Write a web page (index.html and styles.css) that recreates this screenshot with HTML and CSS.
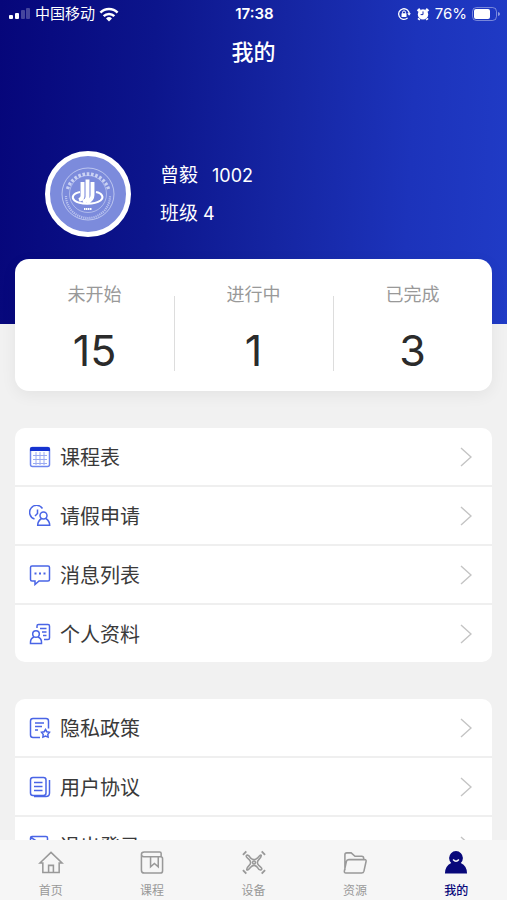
FILE: index.html
```html
<!DOCTYPE html>
<html lang="zh-CN">
<head>
    <meta charset="UTF-8">
    <meta name="viewport" content="width=device-width, initial-scale=1">
    <title>我的</title>
    <link rel="stylesheet" href="styles.css">
</head>
<body>
    <main class="page">
        <header class="hero">
            <div class="status-bar">
                <div class="status-left">
                    <svg width="22" height="12" viewBox="0 0 22 12" fill="#fff">
                        <rect x="0" y="7" width="4" height="4" rx="1"/>
                        <rect x="6" y="5" width="4" height="6" rx="1"/>
                        <rect x="12" y="2" width="4" height="9" rx="1" opacity=".25"/>
                        <rect x="17" y="0" width="4" height="11" rx="1" opacity=".25"/>
                    </svg>
                    <span>中国移动</span>
                    <svg width="20" height="15" viewBox="0 0 18 14" fill="none" stroke="#fff" stroke-width="2.4">
                        <path d="M1 5.2a11.4 11.4 0 0 1 16 0"/>
                        <path d="M4 8.5a7.2 7.2 0 0 1 10 0"/>
                        <path d="M9 13.6l-2.8-2.9a4 4 0 0 1 5.6 0z" fill="#fff" stroke="none"/>
                    </svg>
                </div>
                <span class="time">17:38</span>
                <div class="status-right">
                    <svg width="14" height="14" viewBox="0 0 14 14" fill="none" stroke="#fff" stroke-width="1.3">
                        <path d="M10.6 10.9a5.3 5.3 0 1 1 1.6-3.4"/>
                        <path d="M10.3 6.2h3.6l-1.8 2.6z" fill="#fff" stroke="none"/>
                        <rect x="4.5" y="6.3" width="5" height="3.6" rx=".5" fill="#fff" stroke="none"/>
                        <path d="M5.5 6.5V5.4a1.5 1.5 0 0 1 3 0v1.1" stroke-width="1"/>
                    </svg>
                    <svg width="14" height="14" viewBox="0 0 14 14">
                        <circle cx="7" cy="7.4" r="5.2" fill="#fff"/>
                        <path d="M1.6 4.2L4 2M12.4 4.2L10 2M3.4 11.4l-1 1.3M10.6 11.4l1 1.3" stroke="#fff" stroke-width="2.4"/>
                        <path d="M7 4.4v3.2H4.6" fill="none" stroke="#1b2eb0"/>
                    </svg>
                    <span>76%</span>
                    <svg width="28" height="14" viewBox="0 0 28 14">
                        <rect x=".5" y=".5" width="24" height="13" rx="4" fill="none" stroke="#fff" opacity=".4"/>
                        <rect x="2" y="2" width="16" height="10" rx="2" fill="#fff"/>
                        <path d="M26 5v4q2-.6 2-2t-2-2z" fill="#fff" opacity=".5"/>
                    </svg>
                </div>
            </div>
            <h1>我的</h1>
            <div class="profile">
                <svg class="avatar" viewBox="0 0 86 86">
                    <circle cx="43" cy="43" r="40.500" fill="#7c8bdc" stroke="#fff" stroke-width="5"/>
                    <g fill="none" stroke="#e3e8fb">
                        <circle cx="43" cy="43" r="26" stroke-width=".9" opacity=".7"/>
                        <circle cx="43" cy="43" r="18.500" stroke-width=".7" opacity=".7"/>
                        <path d="M22.500 38a21.500 21.500 0 0 1 41 0" stroke-width="3.400" stroke-dasharray="2.600 1.700" opacity=".75"/>
                        <path d="M21 45a22 22 0 0 0 44 0" stroke-width="2.200" stroke-dasharray="1.200 .9" opacity=".6"/>
                    </g>
                    <g fill="none" stroke="#fff">
                        <path d="M35 41c-7 1.300-9 5.500-5.500 8.500 5 4.200 20 4.400 26 0 4-3.200 1.500-7.500-4.500-8.500" stroke-width="2"/>
                        <path d="M37.500 31v14q0 3-3.500 4M42.500 28.500V46q0 3.500-4.500 5M47.500 31v13q0 5-6 7.500" stroke-width="3.900"/>
                        <path d="M39 58h8" stroke-width="2" stroke-dasharray="1.500 .5"/>
                    </g>
                </svg>
                <div class="profile-info">
                    <div class="profile-line"><span>曾毅</span><span class="digits">1002</span></div>
                    <div>班级<span class="digits"> 4</span></div>
                </div>
            </div>
        </header>

        <section class="stats">
            <div class="stat"><span class="stat-label">未开始</span><span class="stat-value">15</span></div>
            <div class="stat"><span class="stat-label">进行中</span><span class="stat-value">1</span></div>
            <div class="stat"><span class="stat-label">已完成</span><span class="stat-value">3</span></div>
        </section>

        <nav class="menu">
            <a href="#schedule">
                <svg class="icon" viewBox="0 0 22 22">
                    <rect x="1.500" y="1.500" width="19" height="19" rx="2" stroke="#6f86ee"/>
                    <path d="M4 9.500h14M4 13.500h14M4 17.500h14M7 6v13M11 6v13M15 6v13" stroke="#9aaaf2" stroke-width="1"/>
                    <path d="M1 5V3q0-2 2-2h16q2 0 2 2v2z" fill="#1532cf" stroke="none"/>
                </svg>
                <span>课程表</span>
                <svg class="arrow" viewBox="0 0 12 20"><path d="M1 1l10 9-10 9"/></svg>
            </a>
            <a href="#leave">
                <svg class="icon" viewBox="0 0 22 22">
                    <path d="M13.500 3.500A7 7 0 1 0 5.500 14M8.500 4.500v4l-2.500 2.500"/>
                    <circle cx="14.500" cy="10.500" r="3.500"/>
                    <path d="M12.500 13.500q-3.800 2.500-3.800 6.800h12q0-4.300-3.800-6.800"/>
                </svg>
                <span>请假申请</span>
                <svg class="arrow" viewBox="0 0 12 20"><path d="M1 1l10 9-10 9"/></svg>
            </a>
            <a href="#messages">
                <svg class="icon" viewBox="0 0 22 22">
                    <path d="M3 2h16q1.500 0 1.500 1.500v12q0 1.500-1.500 1.500h-9l-4 3.500V17H3q-1.500 0-1.500-1.500v-12Q1.500 2 3 2z"/>
                    <path d="M5.500 9.500h2M10 9.500h2M14.500 9.500h2" stroke-width="2"/>
                </svg>
                <span>消息列表</span>
                <svg class="arrow" viewBox="0 0 12 20"><path d="M1 1l10 9-10 9"/></svg>
            </a>
            <a href="#profile">
                <svg class="icon" viewBox="0 0 22 22">
                    <path d="M8 5V3q0-1.500 1.500-1.500H19q1.500 0 1.500 1.500v12q0 1.500-1.500 1.500h-4M11 5.500h6.500M13 9h4.500M14 12.500h3.500"/>
                    <circle cx="7" cy="11" r="3.300"/>
                    <path d="M5 14q-3.500 1.500-3.500 5v1.500h11V19q0-3.500-3.500-5"/>
                </svg>
                <span>个人资料</span>
                <svg class="arrow" viewBox="0 0 12 20"><path d="M1 1l10 9-10 9"/></svg>
            </a>
        </nav>

        <nav class="menu">
            <a href="#privacy">
                <svg class="icon" viewBox="0 0 22 22">
                    <path d="M11 20.500H4q-2.500 0-2.500-2.500V4Q1.500 1.500 4 1.500h13q2.500 0 2.500 2.500v7.500M6 6h9M6 9.500h7M6 13h3"/>
                    <path d="M16.500 12.500l1.300 2.200 2.700.5-1.700 2.200.3 2.700-2.600-1-2.600 1 .3-2.700-1.700-2.200 2.700-.5z"/>
                </svg>
                <span>隐私政策</span>
                <svg class="arrow" viewBox="0 0 12 20"><path d="M1 1l10 9-10 9"/></svg>
            </a>
            <a href="#agreement">
                <svg class="icon" viewBox="0 0 22 22">
                    <rect x="1.500" y="1.500" width="15.500" height="18" rx="2.500"/>
                    <path d="M5 6.500h8.500M5 10.500h8.500M5 14.500h8.500M20.500 4v13q0 3.500-3.500 3.500H5"/>
                </svg>
                <span>用户协议</span>
                <svg class="arrow" viewBox="0 0 12 20"><path d="M1 1l10 9-10 9"/></svg>
            </a>
            <a href="#logout">
                <svg class="icon" viewBox="0 0 22 22">
                    <path d="M1.500 9V3q0-1.500 1.500-1.500h14q1.500 0 1.500 1.500v3M2 2.500l7 4.500v13.500l-7-4M9 17h9.500v-4M12 10h9M18 7l3 3-3 3"/>
                </svg>
                <span>退出登录</span>
                <svg class="arrow" viewBox="0 0 12 20"><path d="M1 1l10 9-10 9"/></svg>
            </a>
        </nav>
    </main>

    <nav class="tab-bar">
        <a href="#home">
            <svg viewBox="0 0 26 26">
                <path d="M1.500 13.500L13 2.500l11.500 11h-3V23.500h-17V13.500zM10.500 23.500v-7.500h5v7.500"/>
            </svg>
            <span>首页</span>
        </a>
        <a href="#course">
            <svg viewBox="0 0 26 26">
                <path d="M22.500 6.500V3.500q0-1.500-1.500-1.500H5Q2 2 2 4.500V21q0 3 3 3h16.500q2.500 0 2.500-2.500V9q0-2-2-2H4.500Q2 7 2 4.500"/>
                <path d="M11.500 7v10.500l4-3.500 4 3.500V7"/>
            </svg>
            <span>课程</span>
        </a>
        <a href="#device">
            <svg viewBox="0 0 26 26">
                <path d="M9.500 8.500Q7.500 4.500 5.500 5.500T8 10q3 3 0 6t-2.500 4.500 4-2.500q3.500-4 7 0 2 3.500 4 2.500T18 16q-3-3 0-6t2.500-4.500-4 3q-3.500 3-7 0z"/>
                <path d="M1.500 5l3.500-3.500M21 1.500L24.500 5M1.500 21L5 24.500M24.500 21L21 24.500" stroke-width="2"/>
                <circle cx="13" cy="13" r="1.500"/>
            </svg>
            <span>设备</span>
        </a>
        <a href="#resource">
            <svg viewBox="0 0 26 26">
                <path d="M2.500 21V5q0-2 2-2H9l4 3.500h7q2 0 2 2V10M3.500 24q-2 0-1.500-2.500L4 12q.4-2 2.500-2H23q2 0 1.500 2l-2.200 10q-.5 2-2.500 2z"/>
            </svg>
            <span>资源</span>
        </a>
        <a href="#mine" class="active">
            <svg viewBox="0 0 26 26">
                <path d="M8 13.500a7.200 7.200 0 1 1 10 0q6.500 3 6.500 11h-23q0-8 6.500-11z"/>
                <path class="smile" d="M10 10q3 3.500 6 0"/>
            </svg>
            <span>我的</span>
        </a>
    </nav>
</body>
</html>
```

FILE: styles.css
```css
* {
    box-sizing: border-box;
}
body {
    margin: 0;
    height: 100vh;
    display: flex;
    flex-direction: column;
    background: #f1f1f1;
    color: #3a3a3a;
    font-family: Inter, "Noto Sans CJK SC", sans-serif;
}
a {
    color: inherit;
    text-decoration: none;
}
.page {
    flex: 1;
    min-height: 0;
    overflow-y: auto;
    scrollbar-width: none;
}

/* header */
.hero {
    height: 324px;
    color: #fff;
    background: linear-gradient(93deg, #06067a 0%, #0c158c 30%, #1525a2 55%, #1c33bb 80%, #203bc6 100%);
}
.status-bar {
    display: grid;
    grid-template-columns: 1fr auto 1fr;
    align-items: center;
    height: 28px;
    padding: 0 7px 0 9px;
    font-size: 15px;
    line-height: 20px;
}
.status-left,
.status-right {
    display: flex;
    align-items: center;
    gap: 4px;
}
.status-right {
    justify-content: flex-end;
    gap: 5px;
}
.time {
    font-weight: 600;
}
h1 {
    margin: 8px 0 0;
    font-size: 22px;
    line-height: 32px;
    font-weight: 500;
    text-align: center;
}
.profile {
    display: flex;
    align-items: center;
    gap: 29px;
    margin-top: 83px;
    padding: 0 45px;
    font-size: 19px;
    line-height: 38px;
}
.profile-info {
    padding-top: 2px;
}
.avatar {
    width: 86px;
    height: 86px;
}
.profile-line {
    display: flex;
    gap: 14px;
}
.digits {
    font-size: 18px;
}

/* counters */
.stats {
    display: flex;
    position: relative;
    height: 132px;
    margin: -65px 15px 0;
    padding: 20px 0;
    border-radius: 14px;
    background: #fff;
    box-shadow: 0 4px 16px rgba(0, 20, 20, 0.06);
}
.stat {
    flex: 1;
    display: flex;
    flex-direction: column;
    align-items: center;
    gap: 11px;
}
.stat + .stat {
    background: linear-gradient(#ddd, #ddd) 0 17px / 1px 75px no-repeat;
}
.stat-label {
    font-size: 18px;
    line-height: 32px;
    color: #999;
}
.stat-value {
    font-size: 43px;
    line-height: 56px;
    color: #2b2b2b;
}

/* lists */
.menu {
    margin: 37px 15px 0;
    border-radius: 10px;
    background: #fff;
    overflow: hidden;
}
.menu a {
    display: flex;
    align-items: center;
    gap: 9px;
    height: 59px;
    padding: 0 20px 0 14px;
    border-bottom: 2px solid #efefef;
    font-size: 20px;
}
.menu a:last-child {
    height: 57px;
    border-bottom: none;
}
.menu svg {
    fill: none;
    flex: none;
}
.icon {
    width: 22px;
    height: 22px;
    stroke: #4a65e6;
    stroke-width: 1.5;
}
.menu .arrow {
    width: 12px;
    height: 20px;
    margin-left: auto;
    stroke: #c4c4c4;
    stroke-width: 1.4;
}

/* bottom tabs */
.tab-bar {
    display: flex;
    height: 60px;
    background: #f6f6f6;
    color: #999;
}
.tab-bar a {
    flex: 1;
    display: flex;
    flex-direction: column;
    align-items: center;
    gap: 7px;
    padding-top: 10px;
    font-size: 12px;
    line-height: 18px;
}
.tab-bar svg {
    width: 26px;
    height: 26px;
    fill: none;
    stroke: currentColor;
    stroke-width: 1.6;
}
.tab-bar .active {
    color: #08087a;
    font-weight: 500;
}
.tab-bar .active svg {
    fill: currentColor;
    stroke: none;
}
.tab-bar .active .smile {
    fill: none;
    stroke: #f6f6f6;
}
```
